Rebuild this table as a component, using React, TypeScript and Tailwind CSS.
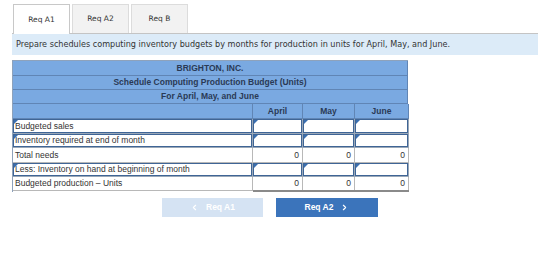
import React from 'react'
import { ChevronLeft, ChevronRight } from 'lucide-react'

const rows = [
  { label: 'Budgeted sales', input: true },
  { label: 'Inventory required at end of month', input: true },
  { label: 'Total needs', input: false },
  { label: 'Less: Inventory on hand at beginning of month', input: true },
  { label: 'Budgeted production \u2013 Units', input: false },
]

const heights = ['h-[15px]', 'h-[14px]', 'h-[15px]', 'h-[14px]', 'h-[14px]']

function Flag() {
  return (
    <span className="absolute left-[1px] top-[1px] w-0 h-0 border-t-[4px] border-t-[#3a6fb0] border-r-[4px] border-r-transparent" />
  )
}

function InputCell({ h }: { h: string }) {
  return (
    <div className={`relative ${h} bg-white border-r border-b border-[#9aa8b8] shadow-[inset_0_0_0_1px_#3f6596]`}>
      <Flag />
    </div>
  )
}

function ValueCell({ h }: { h: string }) {
  return (
    <div className={`${h} bg-white border-r border-b border-[#b8b8b8] flex items-center justify-end pr-[3px] text-[8.5px] text-[#333]`}>
      0
    </div>
  )
}

export default function App() {
  return (
    <div className="w-[560px] h-[263px] bg-white pt-[4px] font-['Liberation_Sans',Arial,sans-serif]">
      {/* Tabs */}
      <div className="flex gap-[2px] pl-[13px] h-[29px] font-['DejaVu_Sans',Verdana,sans-serif] text-[7.5px] text-[#333]">
        <div className="w-[57px] h-[30px] bg-white border border-b-0 border-[#c8c8c8] flex items-center justify-center relative z-10">
          Req A1
        </div>
        <div className="w-[57px] h-[29px] bg-[#f2f2f2] border border-b-0 border-[#dcdcdc] flex items-center justify-center">
          Req A2
        </div>
        <div className="w-[57px] h-[29px] bg-[#f2f2f2] border border-b-0 border-[#dcdcdc] flex items-center justify-center">
          Req B
        </div>
      </div>

      {/* Instructions banner */}
      <div className="ml-[12px] w-[526px] h-[22px] bg-[#dcebf8] border-t border-[#c4c4c4] flex items-center pl-[4px] font-['DejaVu_Sans',Verdana,sans-serif] text-[8.1px] text-[#333]">
        Prepare schedules computing inventory budgets by months for production in units for April, May, and June.
      </div>

      {/* Budget table */}
      <div className="ml-[12px] mt-[5px] w-[396px] border-l border-t border-[#8ea2bb]">
        <div className="h-[15px] bg-[#7aa9e1] border-r border-b border-[#6085b5] flex items-center justify-center text-[8.5px] font-bold text-[#2a3a55]">
          BRIGHTON, INC.
        </div>
        <div className="h-[14px] bg-[#7aa9e1] border-r border-b border-[#6085b5] flex items-center justify-center text-[8.5px] font-bold text-[#2a3a55]">
          Schedule Computing Production Budget (Units)
        </div>
        <div className="h-[14px] bg-[#7aa9e1] border-r border-b border-[#6085b5] flex items-center justify-center text-[8.5px] font-bold text-[#2a3a55]">
          For April, May, and June
        </div>
        <div className="grid grid-cols-[240px_50px_52px_54px] h-[15px] bg-[#7aa9e1] text-[8.5px] font-bold text-[#2a3a55]">
          <div className="border-r border-b border-[#6085b5]" />
          <div className="border-r border-b border-[#6085b5] flex items-center justify-center">April</div>
          <div className="border-r border-b border-[#6085b5] flex items-center justify-center">May</div>
          <div className="border-r border-b border-[#6085b5] flex items-center justify-center">June</div>
        </div>

        {rows.map((row, i) => {
          const h = heights[i]
          return (
            <div key={row.label} className="grid grid-cols-[240px_50px_52px_54px]">
              {row.input ? (
                <div className={`relative ${h} bg-white border-r border-b border-[#9aa8b8] shadow-[inset_0_0_0_1px_#3f6596] flex items-center pl-[2px] text-[8.5px] text-[#333]`}>
                  <Flag />
                  {row.label}
                </div>
              ) : (
                <div className={`${h} bg-white border-r border-b border-[#b8b8b8] flex items-center pl-[2px] text-[8.5px] text-[#333]`}>
                  {row.label}
                </div>
              )}
              {[0, 1, 2].map((c) =>
                row.input ? <InputCell key={c} h={h} /> : <ValueCell key={c} h={h} />
              )}
            </div>
          )
        })}
        <div className="grid grid-cols-[240px_156px]">
          <div />
          <div className="h-[2px] bg-[#8a8a8a] -mt-[1px]" />
        </div>
      </div>

      {/* Navigation buttons */}
      <div className="flex gap-[13px] ml-[162px] mt-[6px]">
        <button className="w-[101px] h-[19px] bg-[#d5e3f3] text-white text-[8.5px] font-bold flex items-center justify-center gap-[7px]">
          <ChevronLeft size={9} strokeWidth={3} /> Req A1
        </button>
        <button className="w-[102px] h-[19px] bg-[#3b74bb] text-white text-[8.5px] font-bold flex items-center justify-center gap-[7px]">
          Req A2 <ChevronRight size={9} strokeWidth={3} />
        </button>
      </div>
    </div>
  )
}
